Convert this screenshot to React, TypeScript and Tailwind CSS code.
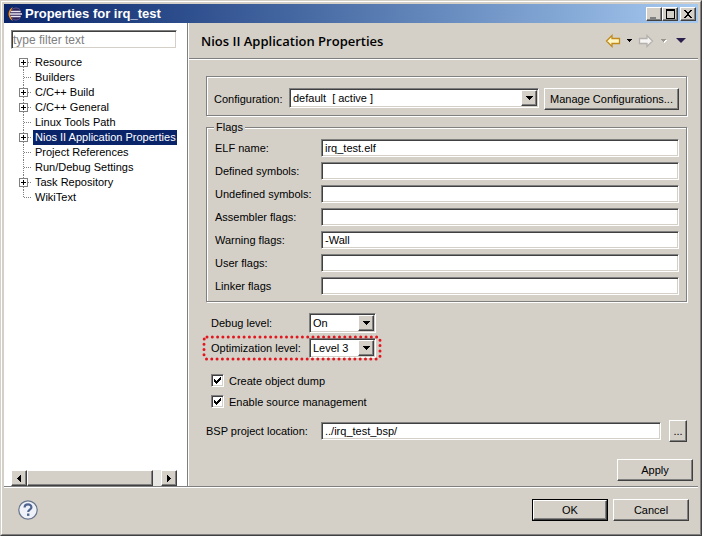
import { useState } from "react";
import type { ReactNode } from "react";

const treeItems = [
  { label: "Resource", expandable: true },
  { label: "Builders", expandable: false },
  { label: "C/C++ Build", expandable: true },
  { label: "C/C++ General", expandable: true },
  { label: "Linux Tools Path", expandable: false },
  { label: "Nios II Application Properties", expandable: true },
  { label: "Project References", expandable: false },
  { label: "Run/Debug Settings", expandable: false },
  { label: "Task Repository", expandable: true },
  { label: "WikiText", expandable: false },
];

const flagFields = [
  { id: "elf", label: "ELF name:", value: "irq_test.elf" },
  { id: "defined", label: "Defined symbols:", value: "" },
  { id: "undefined", label: "Undefined symbols:", value: "" },
  { id: "assembler", label: "Assembler flags:", value: "" },
  { id: "warning", label: "Warning flags:", value: "-Wall" },
  { id: "user", label: "User flags:", value: "" },
  { id: "linker", label: "Linker flags", value: "" },
];

// Classic two-step bevels
const raised =
  "border border-t-white border-l-white border-r-[#404040] border-b-[#404040] bg-[#d4d0c8] shadow-[inset_-1px_-1px_0_#808080]";
const sunken =
  "border border-t-[#808080] border-l-[#808080] border-r-white border-b-white bg-white shadow-[inset_1px_1px_0_#404040,inset_-1px_-1px_0_#d4d0c8]";
const etched = "border border-[#808080] shadow-[1px_1px_0_#fff,inset_1px_1px_0_#fff]";

function TitleButton({ label, children }: { label: string; children: ReactNode }) {
  return (
    <button aria-label={label} className={`${raised} flex h-[14px] w-4 items-center justify-center`}>
      <svg width="12" height="10" viewBox="0 0 12 10" shapeRendering="crispEdges">
        {children}
      </svg>
    </button>
  );
}

function PushButton({ children, className = "" }: { children: ReactNode; className?: string }) {
  return <button className={`${raised} h-[22px] whitespace-nowrap text-center ${className}`}>{children}</button>;
}

function Combo({ id, options, className = "" }: { id: string; options: string[]; className?: string }) {
  return (
    <div className={`${sunken} grid h-5 p-px ${className}`}>
      <select
        id={id}
        className="col-start-1 row-start-1 h-4 min-w-0 appearance-none bg-transparent pl-[2px] leading-4 outline-none"
      >
        {options.map((o) => (
          <option key={o}>{o}</option>
        ))}
      </select>
      <span
        className={`${raised} pointer-events-none col-start-1 row-start-1 flex h-4 w-4 items-center justify-center justify-self-end`}
      >
        <svg width="7" height="4" viewBox="0 0 7 4" shapeRendering="crispEdges">
          <path d="M0 0h7v1H6v1H5v1H4v1H3V3H2V2H1V1H0z" />
        </svg>
      </span>
    </div>
  );
}

function TickBox({ label }: { label: string }) {
  const [checked, setChecked] = useState(true);
  return (
    <label className="flex h-[21px] items-center gap-[5px]">
      <span className="grid">
        <input
          type="checkbox"
          checked={checked}
          onChange={(e) => setChecked(e.target.checked)}
          className={`${sunken} peer col-start-1 row-start-1 size-[13px] appearance-none`}
        />
        <svg
          className="pointer-events-none invisible col-start-1 row-start-1 peer-checked:visible"
          width="13"
          height="13"
          viewBox="0 0 13 13"
          shapeRendering="crispEdges"
        >
          <path d="M3 5h1v1h1v1h1V6h1V5h1V4h1V3h1v3H9v1H8v1H7v1H6v1H5V9H4V8H3z" />
        </svg>
      </span>
      {label}
    </label>
  );
}

function TitleBar() {
  return (
    <header className="flex h-[19px] items-center bg-linear-to-r from-[#0a246a] to-[#a6caf0] pl-[3px] pr-[2px] text-white">
      <svg width="16" height="16" viewBox="0 0 16 16" className="mr-[2px]">
        <path d="M6 1C0 4 0 12 6 15C3 11 3 5 6 1z" fill="#f7941e" />
        <circle cx="9" cy="8" r="6" fill="#2c2255" />
        <path d="M3.8 5.5h9.8M3 8h12M3.8 10.5h9.8" stroke="#e8e4f4" strokeWidth="1.4" />
        <path d="M5 3.5A6 6 0 0 1 13 3.5M5 12.5A6 6 0 0 0 13 12.5" fill="none" stroke="#5d528c" />
      </svg>
      <h1 className="flex-1 text-[13px] font-bold">Properties for irq_test</h1>
      <div className="flex">
        <TitleButton label="Minimize">
          <path d="M2 8h6v2H2z" fill="#808080" />
        </TitleButton>
        <TitleButton label="Maximize">
          <path d="M2 0h9v10H2zM3 2v7h7V2z" fillRule="evenodd" />
        </TitleButton>
      </div>
      <div className="ml-[2px]">
        <TitleButton label="Close">
          <path d="M2 1h2v1h1v1h2V2h1V1h2v1H9v1H8v1H7v2h1v1h1v1h1v1H8V8H7V7H5v1H4v1H2V8h1V7h1V6h1V4H4V3H3V2H2z" />
        </TitleButton>
      </div>
    </header>
  );
}

function Sidebar() {
  const [selected, setSelected] = useState("Nios II Application Properties");

  return (
    <nav className="flex w-[184px] shrink-0 flex-col border-r border-[#808080] bg-white pl-[7px] pr-[10px] pt-[7px]">
      <input
        aria-label="Filter"
        placeholder="type filter text"
        className={`${sunken} h-[19px] w-full px-px text-[12px] outline-none placeholder:text-[#808080]`}
      />
      <ul className="mt-[6px] flex-1 overflow-hidden">
        {treeItems.map((item, i) => (
          <li key={item.label} className="flex h-[15px] pl-2">
            <svg width="14" height="15" viewBox="0 0 14 15" shapeRendering="crispEdges" className="shrink-0">
              <path
                d={i === 0 ? "M4.5 8v7" : i === treeItems.length - 1 ? "M4.5 0v8" : "M4.5 0v15"}
                stroke="#808080"
                strokeDasharray="1 1"
              />
              <path d="M5 7.5h8" stroke="#808080" strokeDasharray="1 1" />
              {item.expandable && (
                <>
                  <rect x="0.5" y="3.5" width="8" height="8" fill="#fff" stroke="#808080" />
                  <path d="M2 7.5h5M4.5 5v5" stroke="#000" />
                </>
              )}
            </svg>
            <button
              onClick={() => setSelected(item.label)}
              className={`whitespace-nowrap px-[2px] leading-[15px] ${
                selected === item.label ? "bg-[#0a246a] text-white" : ""
              }`}
            >
              {item.label}
            </button>
          </li>
        ))}
      </ul>
      {/* Horizontal scrollbar */}
      <div className="flex h-4 bg-[#e9e7e3]">
        <button aria-label="Scroll left" className={`${raised} flex w-4 items-center justify-center`}>
          <svg width="4" height="7" viewBox="0 0 4 7" shapeRendering="crispEdges">
            <path d="M3 0h1v7H3V6H2V5H1V4H0V3h1V2h1V1h1z" />
          </svg>
        </button>
        <div className={`${raised} flex-1`} />
        <div className="w-2" />
        <button aria-label="Scroll right" className={`${raised} flex w-4 items-center justify-center`}>
          <svg width="4" height="7" viewBox="0 0 4 7" shapeRendering="crispEdges">
            <path d="M0 0h1v1h1v1h1v1h1v1H3v1H2v1H1v1H0z" />
          </svg>
        </button>
      </div>
    </nav>
  );
}

function PageHeader() {
  return (
    <div className="flex h-9 items-center border-b border-[#808080] pl-3 pr-3 shadow-[0_1px_0_#fff]">
      <h2 className="flex-1 font-['Open_Sans','Noto_Sans',sans-serif] text-[13px] font-semibold">
        Nios II Application Properties
      </h2>
      <div className="flex items-center">
        <button aria-label="Back">
          <svg width="16" height="14" viewBox="0 0 16 14">
            <path d="M1.5 7L7 1.5V4.5h7.5v5H7v3z" fill="#fff6c4" stroke="#c08a1c" strokeWidth="1.3" />
          </svg>
        </button>
        <button aria-label="Back history" className="ml-[6px]">
          <svg width="5" height="3" viewBox="0 0 5 3" shapeRendering="crispEdges">
            <path d="M0 0h5v1H4v1H3v1H2V2H1V1H0z" />
          </svg>
        </button>
        <button aria-label="Forward" className="ml-[6px]">
          <svg width="16" height="14" viewBox="0 0 16 14">
            <path d="M14.5 7L9 1.5V4.5H1.5v5H9v3z" fill="#f6f5f3" stroke="#b4b1ac" strokeWidth="1.3" />
          </svg>
        </button>
        <button aria-label="Forward history" className="ml-[7px]">
          <svg width="6" height="4" viewBox="0 0 6 4" shapeRendering="crispEdges">
            <path d="M1 1h5v1H5v1H4v1H3V3H2V2H1z" fill="#fff" />
            <path d="M0 0h5v1H4v1H3v1H2V2H1V1H0z" fill="#99968f" />
          </svg>
        </button>
        <button aria-label="View menu" className="ml-[9px]">
          <svg width="10" height="5" viewBox="0 0 10 5">
            <path d="M0 0h10L5 5z" fill="#2b1f4d" />
          </svg>
        </button>
      </div>
    </div>
  );
}

function PropertiesForm() {
  return (
    <form className="flex flex-1 flex-col pb-[5px] pl-[17px] pr-[11px] pt-[17px]" onSubmit={(e) => e.preventDefault()}>
      <div className={`${etched} flex h-10 pl-[7px] pr-[7px] pt-[11px]`}>
        <label htmlFor="configuration" className="w-[75px] shrink-0 leading-[22px]">
          Configuration:
        </label>
        <Combo id="configuration" options={["default \u00a0[ active ]", "debug"]} className="flex-1" />
        <PushButton className="ml-[5px] w-[135px]">Manage Configurations...</PushButton>
      </div>

      <fieldset className={`${etched} mt-1 min-w-0 px-[7px] pb-[6px] pt-[5px]`}>
        <legend className="bg-[#d4d0c8] px-[2px] leading-[14px]">Flags</legend>
        <div className="flex flex-col gap-[5px] pl-px">
          {flagFields.map((field) => (
            <div key={field.id} className="flex h-[18px] items-center">
              <label htmlFor={field.id} className="w-[106px] shrink-0 whitespace-nowrap">
                {field.label}
              </label>
              <input
                id={field.id}
                defaultValue={field.value}
                className={`${sunken} h-[18px] min-w-0 flex-1 px-[3px] outline-none`}
              />
            </div>
          ))}
        </div>
      </fieldset>

      <div className="mt-[11px] flex flex-col gap-[5px] pl-[5px]">
        <div className="flex items-center">
          <label htmlFor="debug" className="w-[98px] shrink-0">
            Debug level:
          </label>
          <Combo id="debug" options={["On", "Off"]} className="w-[67px]" />
        </div>
        <div className="relative flex items-center self-start">
          <label htmlFor="optimization" className="w-[98px] shrink-0 whitespace-nowrap">
            Optimization level:
          </label>
          <Combo id="optimization" options={["Level 3", "Level 2", "Level 1", "Off"]} className="w-[67px]" />
          {/* Highlight around the setting */}
          <svg className="pointer-events-none absolute -inset-x-2 -inset-y-[2px] h-6 w-[181px] overflow-visible">
            <rect
              x="1"
              y="1"
              width="176"
              height="22"
              rx="3"
              fill="none"
              stroke="#e3161e"
              strokeWidth="3"
              strokeLinecap="round"
              strokeDasharray="0 5.3"
            />
          </svg>
        </div>
      </div>

      <div className="mt-3 pl-[5px]">
        <TickBox label="Create object dump" />
        <TickBox label="Enable source management" />
      </div>

      <div className="mt-2 flex items-center">
        <label htmlFor="bsp" className="w-[115px] shrink-0 whitespace-nowrap">
          BSP project location:
        </label>
        <input
          id="bsp"
          defaultValue="../irq_test_bsp/"
          className={`${sunken} h-[18px] min-w-0 flex-1 px-[3px] outline-none`}
        />
        <PushButton className="ml-2 w-[18px]">...</PushButton>
      </div>

      <div className="-mr-[6px] mt-auto flex justify-end">
        <PushButton className="w-[76px]">Apply</PushButton>
      </div>
    </form>
  );
}

function Footer() {
  return (
    <footer className="flex h-[46px] items-center gap-[5px] border-t border-[#808080] pl-[14px] pr-[9px] shadow-[inset_0_1px_0_#fff]">
      <button aria-label="Help" className="mr-auto">
        <svg width="20" height="20" viewBox="0 0 20 20">
          <circle cx="10" cy="10" r="9.2" fill="#eef1f7" stroke="#68758c" strokeWidth="1.2" />
          <path
            d="M6.6 7.5C6.6 3.4 13.4 3.4 13.4 7.2C13.4 9.7 10.2 9.5 10.2 12"
            fill="none"
            stroke="#4f6590"
            strokeWidth="2.2"
          />
          <rect x="9" y="13.5" width="2.4" height="2.4" fill="#4f6590" />
        </svg>
      </button>
      <div className="bg-black p-px">
        <button className={`${raised} block h-5 w-[74px]`}>OK</button>
      </div>
      <PushButton className="w-[76px]">Cancel</PushButton>
    </footer>
  );
}

export default function App() {
  return (
    <div className="flex min-h-screen flex-col border border-b-[#404040] border-l-[#d4d0c8] border-r-[#404040] border-t-[#d4d0c8] bg-[#d4d0c8] font-['Liberation_Sans',Arial,sans-serif] text-[11px] leading-4 text-black">
      <div className="flex flex-1 flex-col border border-b-[#808080] border-l-white border-r-[#808080] border-t-white p-[2px]">
        <TitleBar />
        <div className="flex flex-1">
          <Sidebar />
          <main className="flex min-w-0 flex-1 flex-col border-l border-white">
            <PageHeader />
            <PropertiesForm />
          </main>
        </div>
        <Footer />
      </div>
    </div>
  );
}
